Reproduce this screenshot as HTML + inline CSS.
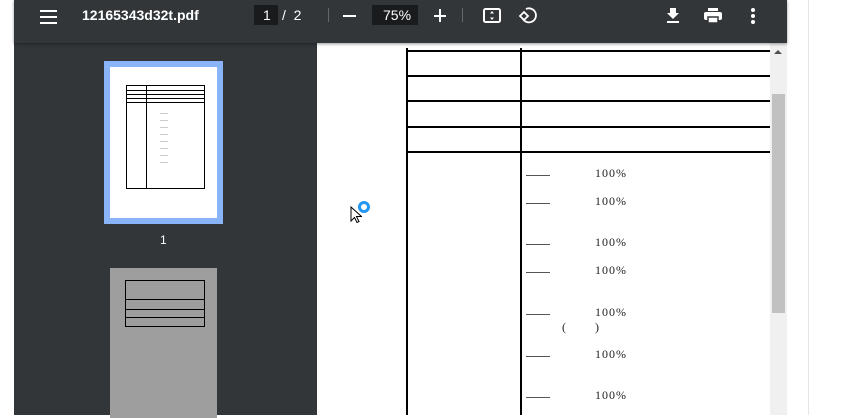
<!DOCTYPE html>
<html><head><style>
body{margin:0;width:846px;height:415px;overflow:hidden;background:#fff;position:relative;font-family:"Liberation Sans",sans-serif}
.a{position:absolute}
#tb{left:14px;top:0;width:773px;height:43px;background:#323639;box-shadow:0 1px 3px rgba(0,0,0,.4);z-index:2}
#sb{left:14px;top:43px;width:303px;height:372px;background:#323639}
.t{color:#fff;font-size:14px;font-weight:bold}
.hl{background:#e9eaea;height:1.5px}
.tl{background:#000;height:2px}
.p{font-family:"Liberation Serif",serif;font-size:12px;color:#222;letter-spacing:1px}
.d{background:#555;height:1px;width:24px}
</style></head><body>
<div class="a" id="tb">
 <div class="a" style="left:26px;top:10px;width:17px"><div class="hl" style="height:2px;margin-bottom:4px;background:#fff"></div><div class="hl" style="height:2px;margin-bottom:4px;background:#fff"></div><div class="hl" style="height:2px;background:#fff"></div></div>
 <div class="a t" style="left:68px;top:7px">12165343d32t.pdf</div>
 <div class="a" style="left:240px;top:5px;width:24px;height:20px;background:#191b1c"></div>
 <div class="a t" style="left:249px;top:7px;font-weight:normal">1</div>
 <div class="a t" style="left:268px;top:7px;font-weight:normal">/&nbsp; 2</div>
 <div class="a" style="left:314px;top:8px;width:1px;height:14px;background:#666"></div>
 <div class="a" style="left:329px;top:15px;width:13px;height:2px;background:#fff"></div>
 <div class="a" style="left:358px;top:5px;width:46px;height:20px;background:#191b1c"></div>
 <div class="a t" style="left:369px;top:7px;font-weight:normal">75%</div>
 <div class="a" style="left:420px;top:15px;width:12px;height:2px;background:#fff"></div>
 <div class="a" style="left:425px;top:9px;width:2px;height:13px;background:#fff"></div>
 <div class="a" style="left:448px;top:8px;width:1px;height:14px;background:#666"></div>
 <svg class="a" style="left:468px;top:6px" width="20" height="20" viewBox="0 0 20 20"><rect x="2" y="3" width="16" height="13" rx="1.5" fill="none" stroke="#fff" stroke-width="2"/><path d="M10 5l2 2.5h-4zM10 14l2-2.5h-4z" fill="#fff"/></svg>
 <svg class="a" style="left:504px;top:5px" width="20" height="20" viewBox="0 0 20 20"><path d="M8 4a7 7 0 1 1-3 10" fill="none" stroke="#fff" stroke-width="1.8"/><path d="M6 7l4 4-4 4-4-4z" fill="none" stroke="#fff" stroke-width="1.8"/><path d="M8 1v6h-4" fill="none" stroke="#fff" stroke-width="0"/></svg>
 <svg class="a" style="left:650px;top:5px" width="18" height="20" viewBox="0 0 18 20"><path d="M6 3h6v5h3l-6 6-6-6h3z" fill="#fff"/><rect x="3" y="16" width="12" height="2" fill="#fff"/></svg>
 <svg class="a" style="left:688px;top:5px" width="22" height="20" viewBox="0 0 22 20"><rect x="6" y="3" width="10" height="3" fill="#fff"/><rect x="2" y="7" width="18" height="8" rx="2" fill="#fff"/><rect x="6" y="12" width="10" height="6" fill="#fff" stroke="#323639" stroke-width="1.5"/></svg>
 <div class="a" style="left:737px;top:8px;width:4px;height:4px;border-radius:2px;background:#fff;box-shadow:0 6px 0 #fff,0 12px 0 #fff"></div>
</div>
<div class="a" id="sb">
 <div class="a" style="left:90px;top:18px;width:119px;height:163px;background:#8ab4f8"></div>
 <div class="a" style="left:96px;top:24px;width:107px;height:151px;background:#fff"></div>
 <div class="a" style="left:112px;top:42px;width:77px;height:102px;border:1px solid #000"></div>
 <div class="a" style="left:132px;top:42px;width:1px;height:103px;background:#000"></div>
 <div class="a" style="left:112px;top:47px;width:78px;height:1px;background:#000;box-shadow:0 4px 0 #000,0 8px 0 #000,0 12px 0 #000"></div>
 <div class="a" style="left:146px;top:66px;width:8px;height:60px;background:repeating-linear-gradient(#fff 0 4px,#ccc 4px 5px,#fff 5px 7px)"></div>
 <div class="a" style="left:146px;top:190px;color:#fff;font-size:12px">1</div>
 <div class="a" style="left:96px;top:225px;width:107px;height:150px;background:#9e9e9e"></div>
 <div class="a" style="left:111px;top:237px;width:78px;height:45px;border:1px solid #000"></div>
 <div class="a" style="left:111px;top:256px;width:80px;height:1px;background:#000;box-shadow:0 10px 0 #000,0 18px 0 #000"></div>
</div>
<div class="a" style="left:317px;top:43px;width:453px;height:372px;background:#fff;overflow:hidden">
 <div class="a" style="left:89px;top:5px;width:2px;height:370px;background:#000"></div>
 <div class="a" style="left:203px;top:5px;width:2px;height:370px;background:#000"></div>
 <div class="a tl" style="left:89px;top:7px;width:370px"></div>
 <div class="a tl" style="left:89px;top:32px;width:370px"></div>
 <div class="a tl" style="left:89px;top:57px;width:370px"></div>
 <div class="a tl" style="left:89px;top:83px;width:370px"></div>
 <div class="a tl" style="left:89px;top:108px;width:370px"></div>
 <div class="a d" style="left:209px;top:132px"></div><div class="a p" style="left:278px;top:123px">100%</div>
 <div class="a d" style="left:209px;top:160px"></div><div class="a p" style="left:278px;top:151px">100%</div>
 <div class="a d" style="left:209px;top:201px"></div><div class="a p" style="left:278px;top:192px">100%</div>
 <div class="a d" style="left:209px;top:229px"></div><div class="a p" style="left:278px;top:220px">100%</div>
 <div class="a d" style="left:209px;top:271px"></div><div class="a p" style="left:278px;top:262px">100%</div>
 <div class="a p" style="left:245px;top:277px">(&nbsp;&nbsp;&nbsp;&nbsp;&nbsp;&nbsp;&nbsp;)</div>
 <div class="a d" style="left:209px;top:313px"></div><div class="a p" style="left:278px;top:304px">100%</div>
 <div class="a d" style="left:209px;top:354px"></div><div class="a p" style="left:278px;top:345px">100%</div>
 <div class="a" style="left:41px;top:158px;width:6px;height:6px;border:3px solid #2196f3;border-radius:50%;background:#fff"></div>
 <svg class="a" style="left:33px;top:163px" width="12" height="18" viewBox="0 0 12 18"><path d="M1 1v14l3.5-3.5 2.5 5 2-1-2.5-5h5z" fill="#fff" stroke="#000" stroke-width="1"/></svg>
</div>
<div class="a" style="left:770px;top:43px;width:17px;height:372px;background:#f0f0f0"></div>
<div class="a" style="left:772px;top:94px;width:13px;height:219px;background:#c1c1c1"></div>
<div class="a" style="left:774px;top:50px;width:0;height:0;border-left:4px solid transparent;border-right:4px solid transparent;border-bottom:4px solid #505050"></div>
<div class="a" style="left:808px;top:0;width:1px;height:415px;background:#e6e6e6"></div>
</body></html>
